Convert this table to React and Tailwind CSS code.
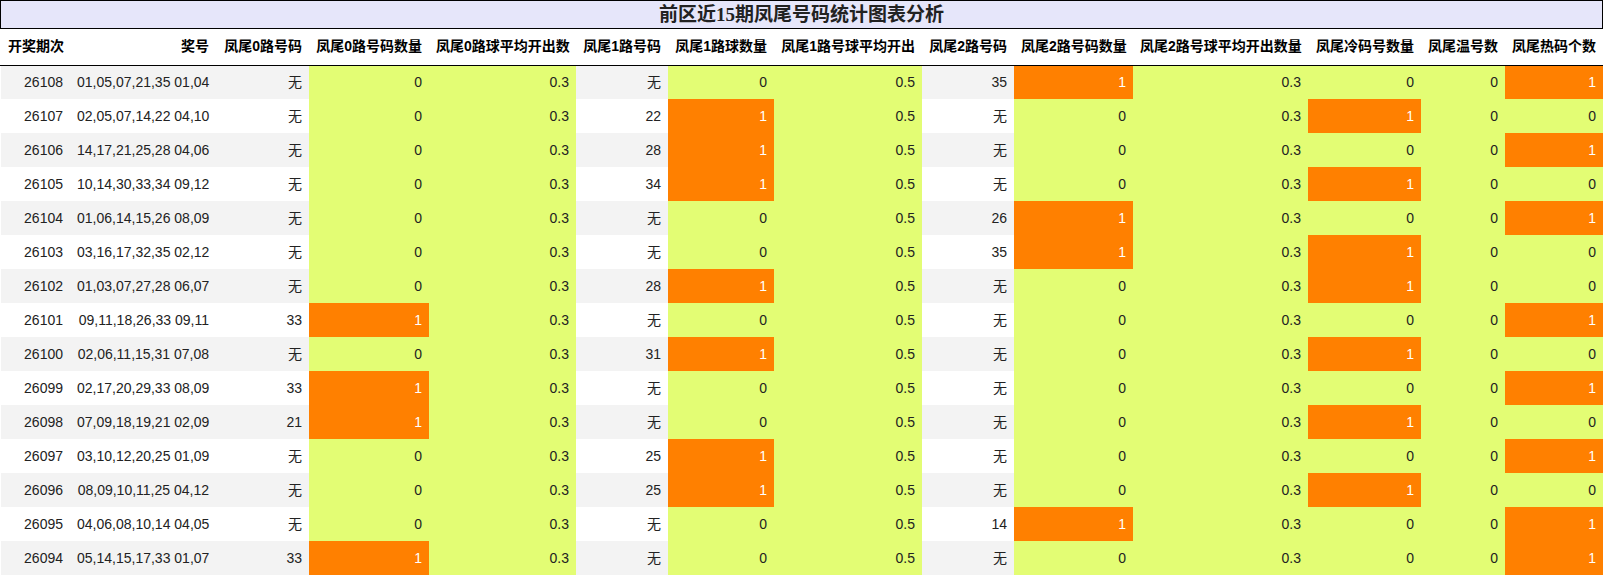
import React from 'react';

const headers = [
  '开奖期次',
  '奖号',
  '凤尾0路号码',
  '凤尾0路号码数量',
  '凤尾0路球平均开出数',
  '凤尾1路号码',
  '凤尾1路球数量',
  '凤尾1路号球平均开出',
  '凤尾2路号码',
  '凤尾2路号码数量',
  '凤尾2路号球平均开出数量',
  '凤尾冷码号数量',
  '凤尾温号数',
  '凤尾热码个数',
];

const widths = [69, 146, 93, 120, 147, 92, 106, 148, 92, 119, 175, 113, 84, 98];

// columns that follow the row striping; the rest are green
const plainCols = [0, 1, 2, 5, 8];
// count columns that turn orange when the value is 1
const flagCols = [3, 6, 9, 11, 13];

const rows = [
  ['26108', '01,05,07,21,35 01,04', '无', '0', '0.3', '无', '0', '0.5', '35', '1', '0.3', '0', '0', '1'],
  ['26107', '02,05,07,14,22 04,10', '无', '0', '0.3', '22', '1', '0.5', '无', '0', '0.3', '1', '0', '0'],
  ['26106', '14,17,21,25,28 04,06', '无', '0', '0.3', '28', '1', '0.5', '无', '0', '0.3', '0', '0', '1'],
  ['26105', '10,14,30,33,34 09,12', '无', '0', '0.3', '34', '1', '0.5', '无', '0', '0.3', '1', '0', '0'],
  ['26104', '01,06,14,15,26 08,09', '无', '0', '0.3', '无', '0', '0.5', '26', '1', '0.3', '0', '0', '1'],
  ['26103', '03,16,17,32,35 02,12', '无', '0', '0.3', '无', '0', '0.5', '35', '1', '0.3', '1', '0', '0'],
  ['26102', '01,03,07,27,28 06,07', '无', '0', '0.3', '28', '1', '0.5', '无', '0', '0.3', '1', '0', '0'],
  ['26101', '09,11,18,26,33 09,11', '33', '1', '0.3', '无', '0', '0.5', '无', '0', '0.3', '0', '0', '1'],
  ['26100', '02,06,11,15,31 07,08', '无', '0', '0.3', '31', '1', '0.5', '无', '0', '0.3', '1', '0', '0'],
  ['26099', '02,17,20,29,33 08,09', '33', '1', '0.3', '无', '0', '0.5', '无', '0', '0.3', '0', '0', '1'],
  ['26098', '07,09,18,19,21 02,09', '21', '1', '0.3', '无', '0', '0.5', '无', '0', '0.3', '1', '0', '0'],
  ['26097', '03,10,12,20,25 01,09', '无', '0', '0.3', '25', '1', '0.5', '无', '0', '0.3', '0', '0', '1'],
  ['26096', '08,09,10,11,25 04,12', '无', '0', '0.3', '25', '1', '0.5', '无', '0', '0.3', '1', '0', '0'],
  ['26095', '04,06,08,10,14 04,05', '无', '0', '0.3', '无', '0', '0.5', '14', '1', '0.3', '0', '0', '1'],
  ['26094', '05,14,15,17,33 01,07', '33', '1', '0.3', '无', '0', '0.5', '无', '0', '0.3', '0', '0', '1'],
];

function cellClass(col, value, rowIdx) {
  if (flagCols.includes(col) && value === '1') return 'bg-[#ff8000] text-white';
  if (plainCols.includes(col)) return rowIdx % 2 === 0 ? 'bg-[#f3f3f3] text-[#222]' : 'bg-white text-[#222]';
  return 'bg-[#e3fd74] text-[#222]';
}

export default function App() {
  return (
    <main className="w-[1604px] h-[576px] bg-white overflow-hidden font-['Liberation_Sans','Noto_Sans_CJK_SC',sans-serif]">
      {/* Title */}
      <div className="w-[1603px] h-[29px] border border-black bg-[#e6e6fa] flex items-center justify-center">
        <h1 className="text-[19px] font-bold leading-none text-[#222] font-['Liberation_Serif','Noto_Sans_CJK_SC',serif]">
          前区近15期凤尾号码统计图表分析
        </h1>
      </div>

      {/* Table */}
      <table className="table-fixed border-collapse w-[1603px] text-[14px]">
        <colgroup>
          <col className="w-px" />
          {widths.map((w, i) => (
            <col key={i} style={{ width: w }} />
          ))}
        </colgroup>
        <thead>
          <tr className="h-[36px] border-b border-black">
            <th className="p-0" />
            {headers.map((h) => (
              <th key={h} className="px-[7px] text-right font-bold text-black whitespace-nowrap">
                {h}
              </th>
            ))}
          </tr>
        </thead>
        <tbody>
          {rows.map((row, r) => (
            <tr key={row[0]} className="h-[34px]">
              <td className="p-0 bg-white" />
              {row.map((v, c) => (
                <td key={c} className={`px-[7px] text-right whitespace-nowrap ${cellClass(c, v, r)}`}>
                  {v}
                </td>
              ))}
            </tr>
          ))}
        </tbody>
      </table>
    </main>
  );
}
